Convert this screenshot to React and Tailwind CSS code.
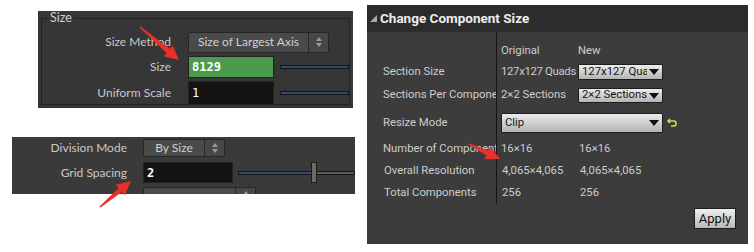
function arrowPoints(x1, y1, x2, y2, hl = 14, hw = 7, sw = 2.6) {
  const dx = x2 - x1;
  const dy = y2 - y1;
  const len = Math.hypot(dx, dy);
  const ux = dx / len;
  const uy = dy / len;
  const px = -uy;
  const py = ux;
  const bx = x2 - ux * hl;
  const by = y2 - uy * hl;
  const pts = [
    [x1 + px * 0.8, y1 + py * 0.8],
    [bx + px * sw, by + py * sw],
    [bx + px * hw, by + py * hw],
    [x2, y2],
    [bx - px * hw, by - py * hw],
    [bx - px * sw, by - py * sw],
    [x1 - px * 0.8, y1 - py * 0.8],
  ];
  return pts.map((p) => p.join(",")).join(" ");
}

function Spinner() {
  return (
    <span className="flex h-full w-[20px] flex-col items-center justify-center gap-[2px] border-l border-[#2a2a2a] bg-[#474747]">
      <span className="h-0 w-0 border-x-[3px] border-b-[4px] border-x-transparent border-b-[#9a9a9a]" />
      <span className="h-0 w-0 border-x-[3px] border-t-[4px] border-x-transparent border-t-[#9a9a9a]" />
    </span>
  );
}

function Slider({ fill = "100%", thumb = false }) {
  return (
    <div className="relative flex h-full flex-1 items-center">
      <div className="h-[4px] w-full border border-[#151515] bg-[#5a5a5a]">
        <div className="h-full bg-[#2c4d73]" style={{ width: fill }} />
      </div>
      {thumb ? (
        <div
          className="absolute top-0 h-full w-[6px] border border-[#1a1a1a] bg-[#6a6a6a]"
          style={{ left: fill }}
        />
      ) : null}
    </div>
  );
}

function SizePanel() {
  return (
    <div className="ml-[38px] mt-[11px] h-[97px] w-[315px] overflow-hidden bg-[#363636] px-[3px] pb-[3px] font-['Lato',sans-serif] text-[12px] text-[#c9c9c9]">
      <fieldset className="h-full border border-[#232323] pl-[2px] pt-[6px]">
        <legend className="ml-[4px] px-[2px] text-[12.5px] leading-[14px] text-[#cfcfcf]">Size</legend>
        <div className="flex h-[22px] items-center">
          <span className="w-[127px] text-right">Size Method</span>
          <div className="ml-[17px] flex h-[21px] w-[141px] items-center rounded-[2px] border border-[#262626] bg-[#4a4a4a]">
            <span className="flex-1 text-center text-[#d0d0d0]">Size of Largest Axis</span>
            <Spinner />
          </div>
        </div>
        <div className="mt-[3px] flex h-[22px] items-center">
          <span className="w-[127px] text-right">Size</span>
          <div className="ml-[17px] flex h-[22px] w-[86px] items-center border border-[#222] bg-[#4c9a4c] pl-[3px] font-['DejaVu_Sans_Mono',monospace] text-[12px] font-bold text-white">
            8129
          </div>
          <div className="ml-[6px] flex h-[22px] flex-1 items-center">
            <Slider />
          </div>
        </div>
        <div className="mt-[3px] flex h-[24px] items-center">
          <span className="w-[127px] text-right">Uniform Scale</span>
          <div className="ml-[17px] flex h-[24px] w-[86px] items-center border border-[#222] bg-[#141414] pl-[3px] font-['DejaVu_Sans_Mono',monospace] text-[12px] text-white">
            1
          </div>
          <div className="ml-[6px] flex h-[22px] flex-1 items-center">
            <Slider />
          </div>
        </div>
      </fieldset>
    </div>
  );
}

function GridPanel() {
  return (
    <div className="ml-[12px] mt-[29px] h-[57px] w-[343px] overflow-hidden bg-[#3a3a3a] font-['Lato',sans-serif] text-[12px] text-[#c9c9c9]">
      <div className="flex h-[20px] items-center pt-[1px]">
        <span className="w-[115px] text-right">Division Mode</span>
        <div className="ml-[16px] flex h-[18px] w-[82px] items-center rounded-[2px] border border-[#262626] bg-[#4a4a4a]">
          <span className="flex-1 text-center text-[#d0d0d0]">By Size</span>
          <Spinner />
        </div>
      </div>
      <div className="mt-[5px] flex h-[21px] items-center">
        <span className="w-[115px] text-right">Grid Spacing</span>
        <div className="ml-[16px] flex h-[21px] w-[90px] items-center border border-[#222] bg-[#141414] pl-[3px] font-['DejaVu_Sans_Mono',monospace] text-[12px] font-bold text-white">
          2
        </div>
        <div className="ml-[5px] flex h-[21px] flex-1 items-center">
          <Slider fill="62%" thumb />
        </div>
      </div>
      <div className="ml-[131px] mt-[4px] flex h-[18px] w-[113px] items-center rounded-[2px] border border-[#262626] bg-[#4a4a4a]">
        <span className="flex-1" />
        <Spinner />
      </div>
    </div>
  );
}

function Dropdown({ label, className }) {
  return (
    <div
      className={`flex items-center justify-between overflow-hidden rounded-[1px] border border-[#1e1e1e] bg-gradient-to-b from-[#ececec] to-[#b4b4b4] pl-[3px] pr-[3px] text-[#141414] ${className}`}
    >
      <span className="min-w-0 overflow-hidden whitespace-nowrap">{label}</span>
      <span className="ml-[2px] h-0 w-0 shrink-0 border-x-[5px] border-t-[6px] border-x-transparent border-t-[#111]" />
    </div>
  );
}

function Row({ label, children, className = "" }) {
  return (
    <div className={`flex items-center ${className}`}>
      <span className="w-[129px] shrink-0 overflow-hidden whitespace-nowrap pl-[16px]">{label}</span>
      <div className="flex items-center pl-[5px]">{children}</div>
    </div>
  );
}

function ComponentSizePanel() {
  const rows = [
    ["Number of Component", "16×16", "16×16", "h-[22px]"],
    ["Overall Resolution", "4,065×4,065", "4,065×4,065", "h-[22px] pl-[1px]"],
    ["Total Components", "256", "256", "h-[22px] pl-[1px]"],
  ];
  return (
    <div className="ml-[7px] mt-[5px] h-[239px] w-[381px] overflow-hidden bg-[#3c3c3c] font-['Roboto',sans-serif] text-[11.3px] text-[#cdcdcd]">
      <div className="flex h-[27px] items-center bg-[#2c2c2c] pl-[3px] text-[13.5px] font-bold text-[#ececec]">
        <span className="mr-[3px] h-0 w-0 border-b-[7px] border-l-[7px] border-b-[#a8a8a8] border-l-transparent" />
        Change Component Size
      </div>
      <div className="relative pt-[9px]">
        <div className="absolute left-[129px] top-0 h-[172px] w-px bg-[#141414]" />
        <Row label="" className="h-[20px]">
          <span className="w-[77px]">Original</span>
          <span>New</span>
        </Row>
        <Row label="Section Size" className="h-[22px]">
          <span className="w-[77px] whitespace-nowrap tracking-[-0.3px]">127x127 Quads</span>
          <Dropdown label="127x127 Qua" className="h-[16px] w-[85px]" />
        </Row>
        <Row label="Sections Per Component" className="h-[25px]">
          <span className="w-[77px] whitespace-nowrap">2×2 Sections</span>
          <Dropdown label="2×2 Sections" className="h-[15px] w-[85px]" />
        </Row>
        <Row label="Resize Mode" className="h-[30px]">
          <Dropdown label="Clip" className="h-[20px] w-[162px]" />
          <svg width="12" height="12" viewBox="0 0 12 12" className="ml-[3px]">
            <path d="M4 2 L2 4 L4 6 M2 4 H8 Q10 4 10 6.5 Q10 9 8 9 H5" fill="none" stroke="#d8d84a" strokeWidth="1.6" />
          </svg>
        </Row>
        {rows.map(([label, a, b, cls]) => (
          <Row key={label} label={label} className={cls}>
            <span className="w-[78px] whitespace-nowrap">{a}</span>
            <span className="whitespace-nowrap">{b}</span>
          </Row>
        ))}
        <div className="mt-[4px] flex justify-end pr-[12px]">
          <button className="h-[21px] w-[42px] border border-[#1c1c1c] bg-gradient-to-b from-[#f0f0f0] to-[#b8b8b8] text-[13px] text-[#111]">
            Apply
          </button>
        </div>
      </div>
    </div>
  );
}

export default function App() {
  const arrows = [
    [140, 27, 179, 60],
    [100, 207, 131, 181],
    [469, 144, 500, 159],
  ];
  return (
    <div className="relative flex h-[252px] w-[754px] overflow-hidden bg-white">
      <div className="flex w-[360px] flex-col">
        <SizePanel />
        <GridPanel />
      </div>
      <ComponentSizePanel />
      <svg className="pointer-events-none absolute left-0 top-0" width="754" height="252">
        {arrows.map((a, i) => (
          <polygon key={i} points={arrowPoints(...a)} fill="#e8302a" />
        ))}
      </svg>
    </div>
  );
}
